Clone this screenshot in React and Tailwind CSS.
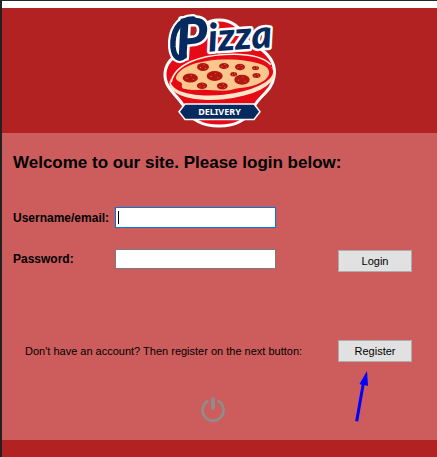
const toppings = [
  [204, 67, 6, 4],
  [225, 66, 5, 3],
  [241, 67, 5, 3.2],
  [256.5, 68, 3.5, 2],
  [257.5, 75.5, 4, 2.5],
  [243, 79.7, 7.7, 5],
  [234.7, 74.3, 3.4, 2.2],
  [215.7, 76, 8, 5],
  [191.3, 78, 7.6, 4.6],
  [203, 85.7, 5.2, 3.2],
  [223.3, 86, 5.4, 3.4],
];

function Logo() {
  return (
    <svg viewBox="162 8 118 122" className="h-[122px] w-[118px] overflow-visible" role="img" aria-label="Pizza Delivery">
      <path
        d="M220 20C234 20 242 28 247 40L262 49C272 57 277 65 275 77C273 90 262 95 256 105C248 121 236 126 220 126C204 126 192 121 184 105C178 95 165 88 166 73C167 62 174 57 184 51L196 40C200 27 208 20 220 20Z"
        fill="#e60a17"
        stroke="#fff"
        strokeWidth="3"
      />
      <g transform="rotate(-6 222 78)">
        <ellipse cx="223" cy="79" rx="53" ry="20.5" fill="#fde6c8" />
        <ellipse cx="223" cy="76.5" rx="51.5" ry="18.5" fill="#e60a17" />
        <path d="M172 77C178 58 206 54 228 55C250 56 266 61 273 70" fill="none" stroke="#fff1df" strokeWidth="1.6" />
      </g>
      <path
        d="M177 77C180 68 194 63 208 61C228 58 252 60 264 65C272 69 272 75 266 80C256 88 240 87 232 90C222 92 210 89 200 90C190 90 181 90 183 85C184 81 176 82 177 77Z"
        fill="#fbc78d"
      />
      {toppings.map(([cx, cy, rx, ry]) => (
        <g key={`${cx}-${cy}`}>
          <ellipse cx={cx} cy={cy} rx={rx} ry={ry} fill="#b1160f" />
          <path d={`M${cx - rx / 2} ${cy + 0.5}h1M${cx + 0.5} ${cy - ry / 2}h1M${cx + rx / 3} ${cy + ry / 3}h1`} stroke="#ef8a5c" strokeWidth="0.8" />
        </g>
      ))}
      <path d="M194 19C180 19 173 32 174 47C175 57 180 61 185 56" fill="none" stroke="#fff" strokeWidth="10" strokeLinecap="round" />
      <g
        transform="rotate(-4 220 45)"
        fill="#062a5f"
        stroke="#fff"
        strokeWidth="5"
        fontFamily="Lato, 'Liberation Sans', sans-serif"
        fontStyle="italic"
        fontWeight="900"
        strokeLinejoin="round"
        paintOrder="stroke"
      >
        <text x="177" y="56" fontSize="55">
          P<tspan fontSize="39" dy="-5">izza</tspan>
        </text>
      </g>
      <path d="M194 19C180 19 173 32 174 47C175 57 180 61 185 56" fill="none" stroke="#062a5f" strokeWidth="5.5" strokeLinecap="round" />
      <path d="M186 104H255L261 111.7L255 119.5H186L180 111.7Z" fill="#062a5f" stroke="#fff" strokeWidth="1.5" />
      <text x="220.5" y="115" textAnchor="middle" fontFamily="'Noto Sans', sans-serif" fontWeight="700" fontSize="9" fill="#fff">
        DELIVERY
      </text>
    </svg>
  );
}

function PowerIcon() {
  return (
    <svg viewBox="0 0 26 26" className="size-[26px]" fill="none" stroke="#8f8c89" strokeLinecap="round" aria-hidden="true">
      <path d="M7.3 5.4A10.5 10.5 0 1 0 18.7 5.4" strokeWidth="2.8" />
      <path d="M13 3V12" strokeWidth="4" />
    </svg>
  );
}

const buttonClass = "h-[22px] w-[74px] border border-[#adadad] bg-[#e1e1e1] text-center text-[11px] leading-[20px]";

export default function App() {
  return (
    <div className="flex min-h-screen flex-col border-t border-l-2 border-t-[#2b2529] border-l-[#222222] bg-[#b22222] font-['Liberation_Sans',Arial,sans-serif] text-[12px] text-black">
      <div className="h-[7px] bg-white" />
      <header className="flex h-[125px] justify-center">
        <Logo />
      </header>
      <main className="bg-[#cd5c5c] pt-5 pr-[25px] pb-[18px] pl-[11px]">
        <h1 className="text-[17px] leading-5 font-bold">Welcome to our site. Please login below:</h1>
        <form className="mt-[34px]" onSubmit={(e) => e.preventDefault()}>
          <div className="flex items-center">
            <label htmlFor="user" className="w-[102px] font-bold">Username/email:</label>
            <div className="relative flex">
              <input id="user" type="text" className="h-[21px] w-[161px] border border-[#0078d7] bg-white px-1 outline-none" />
              <span className="absolute top-1 left-[3px] h-[13px] w-px bg-black" aria-hidden="true" />
            </div>
          </div>
          <div className="mt-[21px] flex items-start">
            <label htmlFor="password" className="w-[102px] leading-5 font-bold">Password:</label>
            <input id="password" type="password" className="h-5 w-[161px] border border-[#7a7a7a] bg-white px-1 outline-none" />
            <button type="submit" className={`${buttonClass} mt-px ml-auto`}>Login</button>
          </div>
        </form>
        <div className="mt-[68px] flex items-center justify-between pl-3">
          <p className="text-[11px]">Don't have an account? Then register on the next button:</p>
          <div className="relative flex">
            <button type="button" className={buttonClass}>Register</button>
            <svg viewBox="0 0 16 52" className="absolute top-[30px] left-[16px] h-[52px] w-4" aria-hidden="true">
              <path d="M13 1L14 16L10.5 15L4.2 51.5L1.2 51L7.6 14.7L5.5 14Z" fill="#0000ff" />
            </svg>
          </div>
        </div>
        <div className="mt-[34px] flex justify-center">
          <button type="button" aria-label="Exit"><PowerIcon /></button>
        </div>
      </main>
    </div>
  );
}
